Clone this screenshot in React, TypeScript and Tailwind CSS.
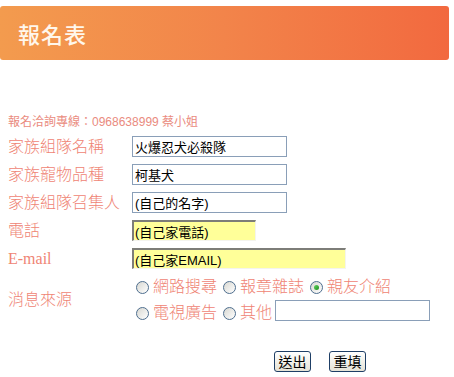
import React from "react";

const labelFont = { fontFamily: '"Liberation Serif", "Noto Sans CJK TC", serif', fontWeight: 300 };
const sansFont = { fontFamily: '"Liberation Sans", "Noto Sans CJK TC", sans-serif' };

function Radio({ checked = false }: { checked?: boolean }) {
  return (
    <span className="relative inline-flex h-[13px] w-[13px] shrink-0 items-center justify-center rounded-full border border-[#4e6e8e] bg-gradient-to-br from-[#d8d8d2] to-white">
      {checked && (
        <span className="h-[5px] w-[5px] rounded-full bg-gradient-to-br from-[#5fd35f] to-[#1c8f1c]" />
      )}
    </span>
  );
}

function Opt({ label, checked }: { label: string; checked?: boolean }) {
  return (
    <span className="flex items-center gap-[4px]">
      <Radio checked={checked} />
      <span className="text-[16px] leading-[20px] text-[#ef8474]" style={labelFont}>
        {label}
      </span>
    </span>
  );
}

function Row({ label, children }: { label: string; children: React.ReactNode }) {
  return (
    <div className="flex h-[21px] items-center">
      <div className="w-[124px] shrink-0 text-[16px] leading-[20px] text-[#ef8474]" style={labelFont}>
        {label}
      </div>
      {children}
    </div>
  );
}

const whiteInput =
  "h-[21px] border border-[#8a9fb8] bg-white px-[2px] text-[13px] text-black outline-none";
const yellowInput =
  "h-[21px] border-t-2 border-l-2 border-r border-b border-t-[#7d7d78] border-l-[#7d7d78] border-r-[#f4f4ee] border-b-[#f4f4ee] bg-[#ffff99] px-[1px] text-[13px] text-black outline-none";

export default function App() {
  return (
    <div className="relative h-[377px] w-[454px] overflow-hidden bg-white">
      <div className="pr-[5px] pt-[6px]">
        <div className="flex h-[54px] items-center rounded-[3px] bg-gradient-to-r from-[#f39b4e] via-[#f2844a] to-[#f2693f] pl-[18px]">
          <span
            className="text-[22px] font-medium tracking-[1px] text-[#fff7ec]"
            style={{ fontFamily: '"Noto Sans CJK TC", sans-serif' }}
          >
            報名表
          </span>
        </div>
      </div>

      <div className="pl-[8px]">
        <div className="mt-[54px] text-[12px] leading-[16px] text-[#ea8b80]" style={sansFont}>
          報名洽詢專線：0968638999 蔡小姐
        </div>

        <div className="mt-[6px] flex flex-col gap-[7px]">
          <Row label="家族組隊名稱">
            <input readOnly defaultValue="火爆忍犬必殺隊" className={`${whiteInput} w-[155px]`} style={sansFont} />
          </Row>
          <Row label="家族寵物品種">
            <input readOnly defaultValue="柯基犬" className={`${whiteInput} w-[155px]`} style={sansFont} />
          </Row>
          <Row label="家族組隊召集人">
            <input readOnly defaultValue="(自己的名字)" className={`${whiteInput} w-[155px]`} style={sansFont} />
          </Row>
          <Row label="電話">
            <input readOnly defaultValue="(自己家電話)" className={`${yellowInput} w-[124px]`} style={sansFont} />
          </Row>
          <Row label="E-mail">
            <input readOnly defaultValue="(自己家EMAIL)" className={`${yellowInput} w-[214px]`} style={sansFont} />
          </Row>
        </div>

        <div className="mt-[5px] flex items-center">
          <div className="w-[128px] shrink-0 text-[16px] leading-[20px] text-[#ef8474]" style={labelFont}>
            消息來源
          </div>
          <div className="flex flex-col">
            <div className="flex h-[26px] items-center gap-[6px]">
              <Opt label="網路搜尋" />
              <Opt label="報章雜誌" />
              <Opt label="親友介紹" checked />
            </div>
            <div className="flex h-[26px] items-center gap-[6px]">
              <Opt label="電視廣告" />
              <span className="flex items-center">
                <Opt label="其他" />
                <input readOnly className={`${whiteInput} ml-[3px] -mt-[6px] w-[155px]`} />
              </span>
            </div>
          </div>
        </div>

        <div className="mt-[25px] flex gap-[18px] pl-[266px]">
          <button
            className="h-[21px] w-[37px] rounded-[3px] border border-[#1f3f66] bg-gradient-to-b from-white to-[#e6e3d6] text-[14px] leading-[18px] text-black"
            style={sansFont}
          >
            送出
          </button>
          <button
            className="h-[21px] w-[37px] rounded-[3px] border border-[#1f3f66] bg-gradient-to-b from-white to-[#e6e3d6] text-[14px] leading-[18px] text-black"
            style={sansFont}
          >
            重填
          </button>
        </div>
      </div>
    </div>
  );
}
